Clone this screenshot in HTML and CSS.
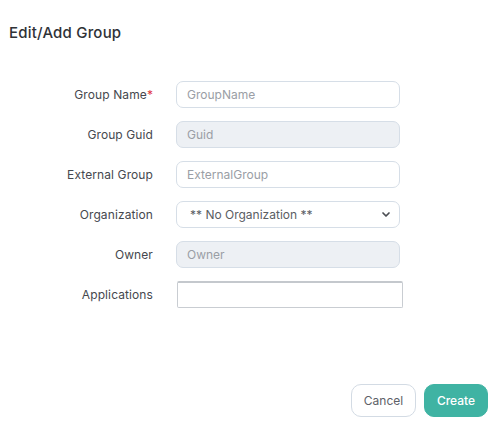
FILE: index.html
```html
<!DOCTYPE html>
<html>
<head>
<meta charset="utf-8">
<link rel="stylesheet" href="styles.css">
</head>
<body>
<div class="dialog">
  <h1 class="title">Edit/Add Group</h1>
  <form class="form">
    <label class="label">Group Name<span class="req">*</span></label>
    <input class="field" type="text" placeholder="GroupName">
    <label class="label">Group Guid</label>
    <input class="field disabled" type="text" placeholder="Guid" disabled>
    <label class="label">External Group</label>
    <input class="field" type="text" placeholder="ExternalGroup">
    <label class="label">Organization</label>
    <div class="select">
      <span class="select-text">** No Organization **</span>
      <svg class="chev" width="10" height="7" viewBox="0 0 10 7"><path d="M2 2 L5 5 L8 2" fill="none" stroke="#4a4d52" stroke-width="1.7" stroke-linecap="round" stroke-linejoin="round"/></svg>
    </div>
    <label class="label">Owner</label>
    <input class="field disabled" type="text" placeholder="Owner" disabled>
    <label class="label">Applications</label>
    <div class="multi"></div>
  </form>
  <div class="footer">
    <button class="btn cancel" type="button">Cancel</button>
    <button class="btn create" type="button">Create</button>
  </div>
</div>
</body>
</html>
```
FILE: styles.css
```css
* { box-sizing: border-box; }
html, body { margin: 0; padding: 0; background: #fff; }
body {
  font-family: "Inter", "Noto Sans", sans-serif;
  color: #3c3f45;
  width: 504px;
  height: 431px;
}
.dialog {
  height: 431px;
  display: flex;
  flex-direction: column;
}
.title {
  margin: 0;
  padding: 22px 0 0 9px;
  font-size: 15px;
  font-weight: 500;
  line-height: 22px;
  color: #2f3237;
  letter-spacing: 0.2px;
}
.form {
  display: grid;
  grid-template-columns: 153px 224px;
  column-gap: 23px;
  row-gap: 13px;
  align-items: center;
  margin-top: 37px;
}
.label {
  text-align: right;
  font-size: 12px;
  color: #45484e;
  letter-spacing: 0.1px;
}
.req { color: #e0363b; }
.field {
  height: 27px;
  border: 1px solid #d6dee7;
  border-radius: 7px;
  padding: 0 10px;
  font-family: inherit;
  font-size: 12px;
  color: #444;
  background: #fff;
  outline: none;
}
.field::placeholder { color: #9a9ea5; }
.field.disabled { background: #edf0f4; }
.select {
  height: 27px;
  border: 1px solid #d6dee7;
  border-radius: 7px;
  padding: 0 8px 0 13px;
  display: flex;
  align-items: center;
  justify-content: space-between;
  font-size: 12px;
  color: #5a5d63;
}
.multi {
  width: 226px;
  margin-left: 1px;
  height: 27px;
  border: 1px solid #c9cdd2;
  border-top: 2px solid #c4c8cd;
  border-radius: 2px;
}
.footer {
  margin-top: auto;
  display: flex;
  justify-content: flex-end;
  gap: 8px;
  padding: 0 16px 14px 0;
}
.btn {
  height: 33px;
  border-radius: 10px;
  font-family: inherit;
  font-size: 12px;
  padding: 0;
  cursor: pointer;
}
.cancel {
  width: 65px;
  background: #fff;
  border: 1px solid #d3dbe4;
  color: #5d6168;
}
.create {
  width: 64px;
  background: #3fb3a3;
  border: 1px solid #3fb3a3;
  color: #fff;
  font-weight: 500;
}
```
